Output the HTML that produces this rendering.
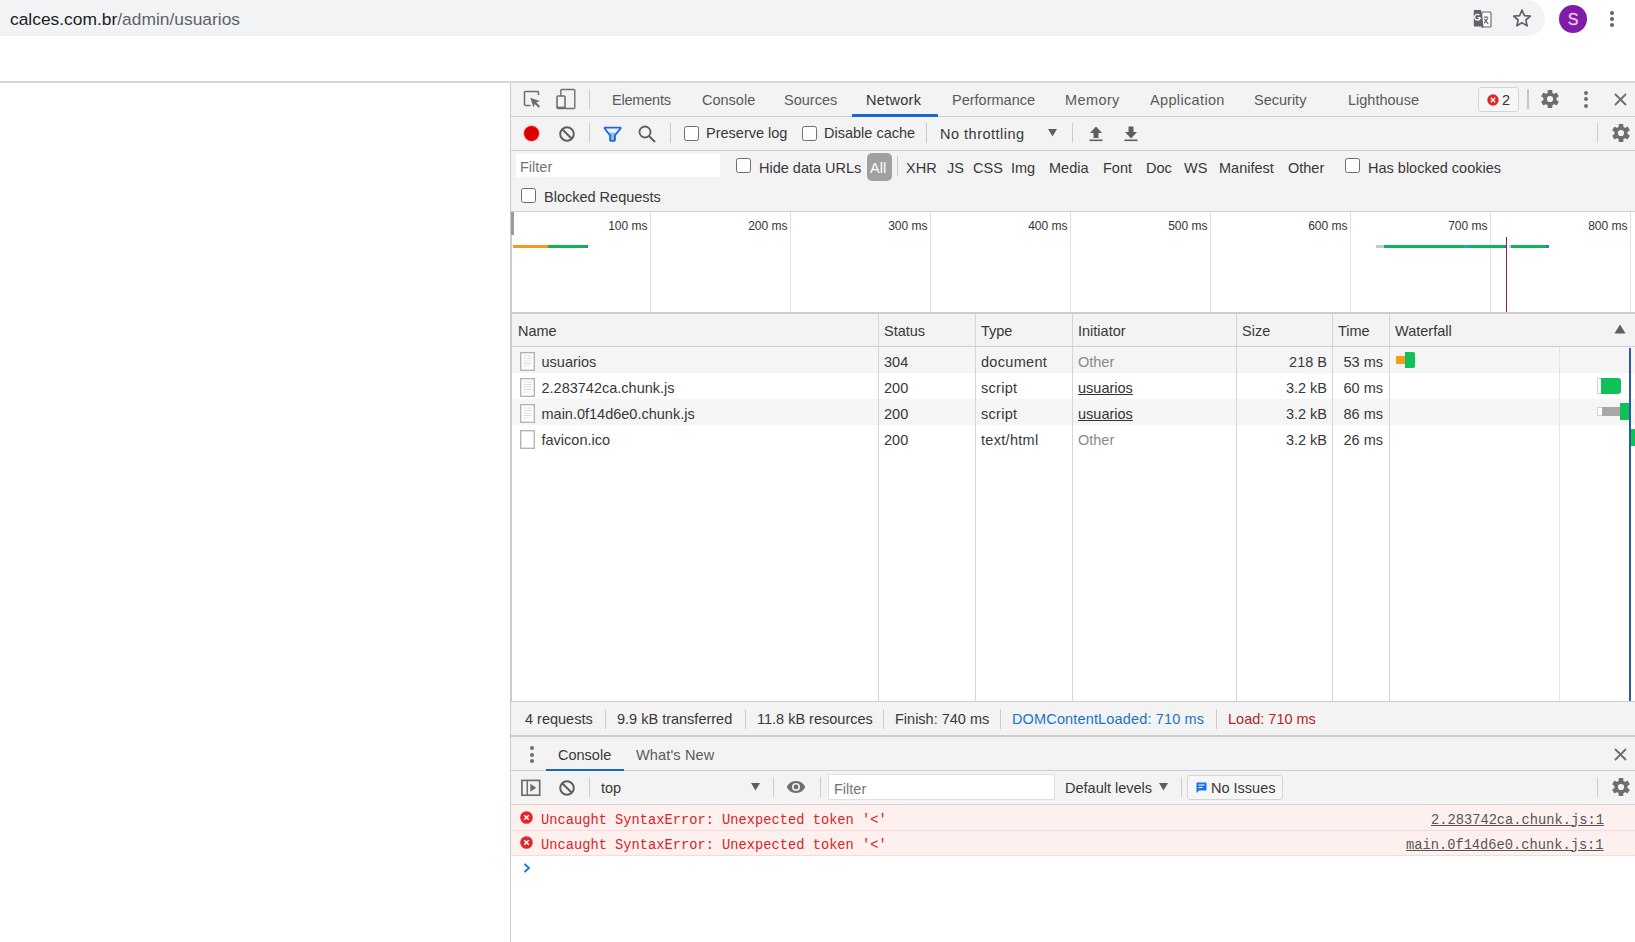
<!DOCTYPE html>
<html><head><meta charset="utf-8">
<style>
*{box-sizing:border-box;margin:0;padding:0}
html,body{width:1635px;height:942px;overflow:hidden;background:#fff;font-family:"Liberation Sans",sans-serif;color:#333}
.a{position:absolute;white-space:nowrap}
.t{position:absolute;white-space:nowrap;font-size:14.5px;line-height:17px;color:#383838}
.g{color:#5f6368}
.hl{position:absolute;height:1px;background:#cacdd1}
.vl{position:absolute;width:1px;background:#cacdd1}
.sep{position:absolute;width:1px;height:20px;background:#ccc}
.cb{position:absolute;width:15px;height:15px;border:1.5px solid #6e6e6e;border-radius:2.5px;background:#fff}
.m{font-family:"Liberation Mono",monospace;font-size:13.73px;line-height:16px}
svg{position:absolute;overflow:visible}
</style></head><body>
<!-- address bar -->
<div class="a" style="left:0;top:0;width:1545px;height:36px;background:#f1f3f4;border-radius:0 18px 18px 0"></div>
<div class="a" style="left:10px;top:9px;font-size:17.4px;line-height:20px;color:#202124">calces.com.br<span style="color:#5f6368">/admin/usuarios</span></div>
<!-- translate icon -->
<svg style="left:1465px;top:2px" width="30" height="30" viewBox="0 0 30 30">
 <rect x="16.8" y="10" width="9.2" height="15" rx="1" fill="#fff" stroke="#5f6368" stroke-width="1.1"/>
 <path d="M8.8 8h7.2l2.6 16.6H9.8a1 1 0 0 1-1-1z" fill="#5f6368"/>
 <path d="M18.5 24.6l-1.7 2v-2z" fill="#5f6368"/>
 <path d="M15.2 15.6h-2.4M15.4 15.4a2.9 2.9 0 1 1-0.9-2.3" fill="none" stroke="#fff" stroke-width="1.3"/>
 <path d="M18.8 15.2h4.6M21 14v1.4M19.3 16.8l4 5.4M22.8 16.4l-3.6 5" fill="none" stroke="#5f6368" stroke-width="1.1"/>
</svg>
<!-- star -->
<svg style="left:1512px;top:8px" width="20" height="20" viewBox="0 0 24 24">
 <path d="M12 2.5l2.9 6.6 7.1.6-5.4 4.7 1.6 7-6.2-3.7-6.2 3.7 1.6-7L2 9.7l7.1-.6z" fill="none" stroke="#5f6368" stroke-width="2" stroke-linejoin="round"/>
</svg>
<!-- avatar -->
<div class="a" style="left:1559px;top:5px;width:28px;height:28px;border-radius:50%;background:#7f1ca8;color:#f7c6ff;font-size:16px;line-height:30px;text-align:center;-webkit-text-stroke:0.3px #f7c6ff">S</div>
<!-- menu dots -->
<div class="a" style="left:1610px;top:11px;width:4px;height:4px;border-radius:50%;background:#5f6368"></div>
<div class="a" style="left:1610px;top:17px;width:4px;height:4px;border-radius:50%;background:#5f6368"></div>
<div class="a" style="left:1610px;top:23px;width:4px;height:4px;border-radius:50%;background:#5f6368"></div>



<!-- ================= devtools ================= -->
<div class="a" style="left:510px;top:82px;width:1125px;height:860px;background:#fff;border-left:1px solid #cbcbcb"></div>

<!-- tab bar -->
<div class="a" style="left:511px;top:82px;width:1124px;height:35px;background:#f3f3f3;border-bottom:1px solid #cacdd1"></div>
<!-- inspect icon -->
<svg style="left:523px;top:90px" width="18" height="18" viewBox="0 0 18 18">
 <path d="M7.5 15.5H2.5a1 1 0 0 1-1-1V2.5a1 1 0 0 1 1-1h12a1 1 0 0 1 1 1V5" fill="none" stroke="#6e6e6e" stroke-width="1.5"/>
 <path d="M7.3 7.8L16.9 11.1 13.3 12.5 17.1 16.3 15.7 17.7 11.9 13.9 10.5 17.5Z" fill="#6e6e6e"/>
</svg>
<!-- device icon -->
<svg style="left:556px;top:89px" width="20" height="20" viewBox="0 0 20 20">
 <path d="M4.8 7V1.5a1 1 0 0 1 1-1h12a1 1 0 0 1 1 1v17a1 1 0 0 1-1 1H9" fill="none" stroke="#6e6e6e" stroke-width="1.4"/>
 <rect x="1" y="7" width="8" height="12.4" rx="1" fill="none" stroke="#6e6e6e" stroke-width="1.6"/>
 <rect x="1" y="17.6" width="8" height="1.8" fill="#6e6e6e"/>
</svg>
<div class="sep" style="left:589px;top:89px;height:20px"></div>
<div class="t" style="left:612px;top:92px;color:#5a5a5a;letter-spacing:-0.2px">Elements</div>
<div class="t" style="left:702px;top:92px;color:#5a5a5a">Console</div>
<div class="t" style="left:784px;top:92px;color:#5a5a5a">Sources</div>
<div class="t" style="left:866px;top:92px;color:#333;letter-spacing:0.3px">Network</div>
<div class="a" style="left:852px;top:114px;width:86px;height:3px;background:#1b6ad3"></div>
<div class="t" style="left:952px;top:92px;color:#5a5a5a">Performance</div>
<div class="t" style="left:1065px;top:92px;color:#5a5a5a;letter-spacing:0.4px">Memory</div>
<div class="t" style="left:1150px;top:92px;color:#5a5a5a;letter-spacing:0.35px">Application</div>
<div class="t" style="left:1254px;top:92px;color:#5a5a5a">Security</div>
<div class="t" style="left:1348px;top:92px;color:#5a5a5a">Lighthouse</div>
<!-- error badge -->
<div class="a" style="left:1478px;top:87px;width:41px;height:25px;border:1px solid #d5d5d5;border-radius:3px;background:#f6f6f6"></div>
<svg style="left:1487px;top:94px" width="12" height="12" viewBox="0 0 12 12">
 <circle cx="6" cy="6" r="5.7" fill="#e0272b"/>
 <path d="M3.8 3.8l4.4 4.4M8.2 3.8l-4.4 4.4" stroke="#fff" stroke-width="1.3"/>
</svg>
<div class="t" style="left:1502px;top:92px;color:#333">2</div>
<div class="sep" style="left:1527px;top:89px;height:20px;width:1.5px;background:#c4c4c4"></div>
<!-- gear -->
<svg style="left:1540px;top:89px" width="20" height="20" viewBox="0 0 20 20"><g transform="translate(10 10)"><circle r="6.6" fill="#6e6e6e"/><rect x="-2.3" y="-9" width="4.6" height="18" rx="0.6" fill="#6e6e6e"/><rect x="-2.3" y="-9" width="4.6" height="18" rx="0.6" fill="#6e6e6e" transform="rotate(60)"/><rect x="-2.3" y="-9" width="4.6" height="18" rx="0.6" fill="#6e6e6e" transform="rotate(120)"/><circle r="3.1" fill="#f3f3f3"/></g></svg>
<div class="a" style="left:1584px;top:91px;width:4px;height:4px;border-radius:50%;background:#6e6e6e"></div>
<div class="a" style="left:1584px;top:97px;width:4px;height:4px;border-radius:50%;background:#6e6e6e"></div>
<div class="a" style="left:1584px;top:104px;width:4px;height:4px;border-radius:50%;background:#6e6e6e"></div>
<svg style="left:1614px;top:93px" width="13" height="13" viewBox="0 0 13 13">
 <path d="M1 1l11 11M12 1L1 12" stroke="#6e6e6e" stroke-width="1.8"/>
</svg>

<!-- network toolbar -->
<div class="a" style="left:511px;top:117px;width:1124px;height:34px;background:#f3f3f3;border-bottom:1px solid #cacdd1"></div>
<div class="a" style="left:524px;top:125.5px;width:15px;height:15px;border-radius:50%;background:#dc0000;box-shadow:0 0 1.5px 0.8px rgba(255,90,90,.45)"></div>
<svg style="left:559px;top:125.5px" width="16" height="16" viewBox="0 0 16 16">
 <circle cx="8" cy="8" r="6.8" fill="none" stroke="#5f5f5f" stroke-width="2"/>
 <path d="M3.2 3.2l9.6 9.6" stroke="#5f5f5f" stroke-width="2"/>
</svg>
<div class="sep" style="left:589px;top:123px"></div>
<svg style="left:598px;top:120px" width="30" height="28" viewBox="0 0 30 28">
 <defs><linearGradient id="fg" x1="0" y1="0" x2="0" y2="1"><stop offset="0" stop-color="#eaf3ff"/><stop offset="0.35" stop-color="#eaf3ff"/><stop offset="0.42" stop-color="#8db8f5"/><stop offset="1" stop-color="#8ab4f8"/></linearGradient></defs>
 <path d="M6.7 7.6h15.8v0.9l-5.6 7v4.6a0.8 0.8 0 0 1-0.8 0.8h-3.2a0.8 0.8 0 0 1-0.8-0.8v-4.6l-5.4-7z" fill="url(#fg)" stroke="#1b6ad6" stroke-width="1.9" stroke-linejoin="round"/>
</svg>
<svg style="left:638px;top:125px" width="19" height="18" viewBox="0 0 19 18">
 <circle cx="7" cy="7" r="5.5" fill="none" stroke="#5f5f5f" stroke-width="1.8"/>
 <path d="M11 11l6 6" stroke="#5f5f5f" stroke-width="2"/>
</svg>
<div class="sep" style="left:670px;top:123px"></div>
<div class="cb" style="left:684px;top:126px"></div>
<div class="t" style="left:706px;top:125px">Preserve log</div>
<div class="cb" style="left:802px;top:126px"></div>
<div class="t" style="left:824px;top:125px">Disable cache</div>
<div class="sep" style="left:926px;top:123px"></div>
<div class="t" style="left:940px;top:125.5px;letter-spacing:0.5px">No throttling</div>
<svg style="left:1048px;top:128.5px" width="9" height="8" viewBox="0 0 9 8"><path d="M0 0h9L4.5 7.5z" fill="#5f5f5f"/></svg>
<div class="sep" style="left:1072px;top:123px"></div>
<svg style="left:1089px;top:125.5px" width="14" height="16" viewBox="0 0 14 16">
 <path d="M7 0.5L13 7H9.5v5h-5V7H1z" fill="#5f5f5f"/><rect x="0.5" y="13.5" width="13" height="1.6" fill="#5f5f5f"/>
</svg>
<svg style="left:1124px;top:125.5px" width="14" height="16" viewBox="0 0 14 16">
 <path d="M4.5 0.5h5V6H13L7 12.5 1 6h3.5z" fill="#5f5f5f"/><rect x="0.5" y="13.5" width="13" height="1.6" fill="#5f5f5f"/>
</svg>
<div class="sep" style="left:1597px;top:123px"></div>
<svg style="left:1610.6px;top:122.8px" width="20" height="20" viewBox="0 0 20 20"><g transform="translate(10 10)"><circle r="6.6" fill="#6e6e6e"/><rect x="-2.3" y="-9" width="4.6" height="18" rx="0.6" fill="#6e6e6e"/><rect x="-2.3" y="-9" width="4.6" height="18" rx="0.6" fill="#6e6e6e" transform="rotate(60)"/><rect x="-2.3" y="-9" width="4.6" height="18" rx="0.6" fill="#6e6e6e" transform="rotate(120)"/><circle r="3.1" fill="#f3f3f3"/></g></svg>

<!-- filter bar -->
<div class="a" style="left:511px;top:151px;width:1124px;height:61px;background:#f3f3f3;border-bottom:1px solid #cacdd1"></div>
<div class="a" style="left:516px;top:154px;width:204px;height:23px;background:#fff"></div>
<div class="t" style="left:520px;top:158.5px;color:#757575">Filter</div>
<div class="cb" style="left:736px;top:158px"></div>
<div class="t" style="left:759px;top:159.5px">Hide data URLs</div>
<div class="a" style="left:867px;top:153px;width:25px;height:28px;border-radius:5px;background:#a0a0a0"></div>
<div class="t" style="left:870px;top:160px;color:#fff">All</div>
<div class="sep" style="left:897px;top:156px"></div>
<div class="t" style="left:906px;top:160px">XHR</div>
<div class="t" style="left:947px;top:160px">JS</div>
<div class="t" style="left:973px;top:160px">CSS</div>
<div class="t" style="left:1011px;top:160px">Img</div>
<div class="t" style="left:1049px;top:160px">Media</div>
<div class="t" style="left:1103px;top:160px">Font</div>
<div class="t" style="left:1146px;top:160px">Doc</div>
<div class="t" style="left:1184px;top:160px">WS</div>
<div class="t" style="left:1219px;top:160px">Manifest</div>
<div class="t" style="left:1288px;top:160px">Other</div>
<div class="cb" style="left:1345px;top:158px"></div>
<div class="t" style="left:1368px;top:159.5px">Has blocked cookies</div>
<div class="cb" style="left:521px;top:188px"></div>
<div class="t" style="left:544px;top:188.5px">Blocked Requests</div>

<!-- overview -->
<div class="a" style="left:511px;top:212px;width:1124px;height:100px;background:#fff"></div>
<div class="a" style="left:511px;top:212px;width:3px;height:23px;background:#9a9a9a"></div>
<div class="a" style="left:511px;top:312px;width:1124px;height:2px;background:#cdcdcd"></div>
<div class="a" style="left:650px;top:212px;width:1px;height:100px;background:#e1e1e1"></div>
<div class="a" style="left:510.5px;top:219px;width:137px;text-align:right;font-size:12px;line-height:14px;color:#333">100 ms</div>
<div class="a" style="left:790px;top:212px;width:1px;height:100px;background:#e1e1e1"></div>
<div class="a" style="left:650.5px;top:219px;width:137px;text-align:right;font-size:12px;line-height:14px;color:#333">200 ms</div>
<div class="a" style="left:930px;top:212px;width:1px;height:100px;background:#e1e1e1"></div>
<div class="a" style="left:790.5px;top:219px;width:137px;text-align:right;font-size:12px;line-height:14px;color:#333">300 ms</div>
<div class="a" style="left:1070px;top:212px;width:1px;height:100px;background:#e1e1e1"></div>
<div class="a" style="left:930.5px;top:219px;width:137px;text-align:right;font-size:12px;line-height:14px;color:#333">400 ms</div>
<div class="a" style="left:1210px;top:212px;width:1px;height:100px;background:#e1e1e1"></div>
<div class="a" style="left:1070.5px;top:219px;width:137px;text-align:right;font-size:12px;line-height:14px;color:#333">500 ms</div>
<div class="a" style="left:1350px;top:212px;width:1px;height:100px;background:#e1e1e1"></div>
<div class="a" style="left:1210.5px;top:219px;width:137px;text-align:right;font-size:12px;line-height:14px;color:#333">600 ms</div>
<div class="a" style="left:1490px;top:212px;width:1px;height:100px;background:#e1e1e1"></div>
<div class="a" style="left:1350.5px;top:219px;width:137px;text-align:right;font-size:12px;line-height:14px;color:#333">700 ms</div>
<div class="a" style="left:1630px;top:212px;width:1px;height:100px;background:#e1e1e1"></div>
<div class="a" style="left:1490.5px;top:219px;width:137px;text-align:right;font-size:12px;line-height:14px;color:#333">800 ms</div>

<div class="a" style="left:513px;top:245px;width:35.4px;height:3px;background:#f29a1e"></div>
<div class="a" style="left:548.4px;top:245px;width:38px;height:3px;background:#0fb456"></div>
<div class="a" style="left:586.4px;top:245px;width:2px;height:3px;background:#2a7ad8"></div>
<div class="a" style="left:1376px;top:245px;width:8px;height:3px;background:#c8c8c8"></div>
<div class="a" style="left:1384px;top:245px;width:80px;height:3px;background:#0fb456"></div>
<div class="a" style="left:1464px;top:245px;width:3.5px;height:3px;background:#2a9ad8"></div>
<div class="a" style="left:1467.5px;top:245px;width:36px;height:3px;background:#0fb456"></div>
<div class="a" style="left:1503.5px;top:245px;width:2px;height:3px;background:#2a7ad8"></div>
<div class="a" style="left:1508.5px;top:245px;width:2.5px;height:3px;background:#c8c8c8"></div>
<div class="a" style="left:1511px;top:245px;width:35px;height:3px;background:#0fb456"></div>
<div class="a" style="left:1546px;top:245px;width:3px;height:3px;background:#2a7ad8"></div>
<div class="a" style="left:1505.5px;top:237px;width:1.5px;height:75px;background:#8b2a2a"></div>

<!-- table header -->
<div class="a" style="left:511px;top:314px;width:1124px;height:33px;background:#f3f3f3;border-bottom:1px solid #cdcdcd"></div>
<div class="t" style="left:518px;top:322.8px">Name</div>
<div class="t" style="left:884px;top:322.8px">Status</div>
<div class="t" style="left:981px;top:322.8px">Type</div>
<div class="t" style="left:1078px;top:322.8px">Initiator</div>
<div class="t" style="left:1242px;top:322.8px">Size</div>
<div class="t" style="left:1338px;top:322.8px">Time</div>
<div class="t" style="left:1395px;top:322.8px">Waterfall</div>
<svg style="left:1614px;top:324px" width="12" height="10" viewBox="0 0 12 10"><path d="M6 0.5L11.5 9.5H0.5z" fill="#5f5f5f"/></svg>

<!-- rows -->
<div class="a" style="left:511px;top:347px;width:1124px;height:26px;background:#f5f5f5"></div>
<div class="a" style="left:511px;top:399px;width:1124px;height:26px;background:#f5f5f5"></div>
<div class="a" style="left:878px;top:314px;width:1px;height:387px;background:#d5d5d5"></div>
<div class="a" style="left:975px;top:314px;width:1px;height:387px;background:#d5d5d5"></div>
<div class="a" style="left:1072px;top:314px;width:1px;height:387px;background:#d5d5d5"></div>
<div class="a" style="left:1236px;top:314px;width:1px;height:387px;background:#d5d5d5"></div>
<div class="a" style="left:1332px;top:314px;width:1px;height:387px;background:#d5d5d5"></div>
<div class="a" style="left:1389px;top:314px;width:1px;height:387px;background:#d5d5d5"></div>
<div class="a" style="left:1559px;top:347px;width:1px;height:354px;background:#e4e4e4"></div>
<div class="a" style="left:1629px;top:348px;width:1.5px;height:353px;background:#2b5aa8"></div>
<svg style="left:520px;top:352px" width="15" height="19" viewBox="0 0 15 19"><rect x="0.7" y="0.7" width="13.6" height="17.6" fill="#fff" stroke="#b0b0b0" stroke-width="1.3"/><path d="M3.5 4h3M7.5 4h4M3.5 6.5h2M6.5 6.5h5M3.5 9h4M8.5 9h3M3.5 11.5h3M7 11.5h4.5M3.5 14h2.5M7 14h2" stroke="#d8d8d8" stroke-width="1"/></svg>
<div class="t" style="left:541.5px;top:354px">usuarios</div>
<div class="t" style="left:884px;top:354px">304</div>
<div class="t" style="left:981px;top:354px;letter-spacing:0.3px">document</div>
<div class="t" style="left:1078px;top:354px;color:#8a8a8a">Other</div>
<div class="t" style="left:1236px;top:354px;width:91px;text-align:right">218 B</div>
<div class="t" style="left:1332px;top:354px;width:51px;text-align:right">53 ms</div>
<svg style="left:520px;top:378px" width="15" height="19" viewBox="0 0 15 19"><rect x="0.7" y="0.7" width="13.6" height="17.6" fill="#fff" stroke="#b0b0b0" stroke-width="1.3"/><path d="M3.5 4h3M7.5 4h4M3.5 6.5h2M6.5 6.5h5M3.5 9h4M8.5 9h3M3.5 11.5h3M7 11.5h4.5M3.5 14h2.5M7 14h2" stroke="#d8d8d8" stroke-width="1"/></svg>
<div class="t" style="left:541.5px;top:380px">2.283742ca.chunk.js</div>
<div class="t" style="left:884px;top:380px">200</div>
<div class="t" style="left:981px;top:380px;letter-spacing:0.3px">script</div>
<div class="t" style="left:1078px;top:380px;color:#333;text-decoration:underline">usuarios</div>
<div class="t" style="left:1236px;top:380px;width:91px;text-align:right">3.2 kB</div>
<div class="t" style="left:1332px;top:380px;width:51px;text-align:right">60 ms</div>
<svg style="left:520px;top:404px" width="15" height="19" viewBox="0 0 15 19"><rect x="0.7" y="0.7" width="13.6" height="17.6" fill="#fff" stroke="#b0b0b0" stroke-width="1.3"/><path d="M3.5 4h3M7.5 4h4M3.5 6.5h2M6.5 6.5h5M3.5 9h4M8.5 9h3M3.5 11.5h3M7 11.5h4.5M3.5 14h2.5M7 14h2" stroke="#d8d8d8" stroke-width="1"/></svg>
<div class="t" style="left:541.5px;top:406px">main.0f14d6e0.chunk.js</div>
<div class="t" style="left:884px;top:406px">200</div>
<div class="t" style="left:981px;top:406px;letter-spacing:0.3px">script</div>
<div class="t" style="left:1078px;top:406px;color:#333;text-decoration:underline">usuarios</div>
<div class="t" style="left:1236px;top:406px;width:91px;text-align:right">3.2 kB</div>
<div class="t" style="left:1332px;top:406px;width:51px;text-align:right">86 ms</div>
<svg style="left:520px;top:430px" width="15" height="19" viewBox="0 0 15 19"><rect x="0.7" y="0.7" width="13.6" height="17.6" fill="#fff" stroke="#b0b0b0" stroke-width="1.3"/></svg>
<div class="t" style="left:541.5px;top:432px">favicon.ico</div>
<div class="t" style="left:884px;top:432px">200</div>
<div class="t" style="left:981px;top:432px;letter-spacing:0.3px">text/html</div>
<div class="t" style="left:1078px;top:432px;color:#8a8a8a">Other</div>
<div class="t" style="left:1236px;top:432px;width:91px;text-align:right">3.2 kB</div>
<div class="t" style="left:1332px;top:432px;width:51px;text-align:right">26 ms</div>

<!-- waterfall bars -->
<div class="a" style="left:1395.5px;top:355.5px;width:10px;height:8px;background:#f79b1a;border-radius:1px 0 0 1px"></div>
<div class="a" style="left:1405px;top:352px;width:10px;height:15.5px;background:#10c158;border-radius:0 2px 2px 0"></div>
<div class="a" style="left:1597px;top:378px;width:4px;height:16px;background:#fff;border:1px solid #d0d0d0;border-right:0"></div>
<div class="a" style="left:1600.5px;top:377.5px;width:20.5px;height:16.5px;background:#10c158;border-radius:0 3px 3px 0"></div>
<div class="a" style="left:1597px;top:407px;width:5.5px;height:9px;background:#fff;border:1px solid #d0d0d0;border-right:0"></div>
<div class="a" style="left:1602.3px;top:407px;width:18px;height:9px;background:#a8a8a8"></div>
<div class="a" style="left:1620.2px;top:403.3px;width:9px;height:16.5px;background:#10c158"></div>
<div class="a" style="left:1630.5px;top:429px;width:5px;height:17px;background:#10c158"></div>

<!-- summary -->
<div class="a" style="left:511px;top:701px;width:1124px;height:36px;background:#f3f3f3;border-top:1px solid #cdcdcd;border-bottom:2px solid #cdcdcd"></div>
<div class="t" style="left:525px;top:711px">4 requests</div>
<div class="sep" style="left:605px;top:709px"></div>
<div class="t" style="left:617px;top:711px">9.9 kB transferred</div>
<div class="sep" style="left:745px;top:709px"></div>
<div class="t" style="left:757px;top:711px">11.8 kB resources</div>
<div class="sep" style="left:883px;top:709px"></div>
<div class="t" style="left:895px;top:711px">Finish: 740 ms</div>
<div class="sep" style="left:1000px;top:709px"></div>
<div class="t" style="left:1012px;top:711px;color:#1a73c8;letter-spacing:0.15px">DOMContentLoaded: 710 ms</div>
<div class="sep" style="left:1216px;top:709px"></div>
<div class="t" style="left:1228px;top:711px;color:#b3261e">Load: 710 ms</div>

<!-- drawer tabs -->
<div class="a" style="left:511px;top:737px;width:1124px;height:34px;background:#f3f3f3;border-bottom:1px solid #cacdd1"></div>
<div class="a" style="left:530px;top:746px;width:4px;height:4px;border-radius:50%;background:#6e6e6e"></div>
<div class="a" style="left:530px;top:752.5px;width:4px;height:4px;border-radius:50%;background:#6e6e6e"></div>
<div class="a" style="left:530px;top:759px;width:4px;height:4px;border-radius:50%;background:#6e6e6e"></div>
<div class="t" style="left:558px;top:746.7px">Console</div>
<div class="a" style="left:546px;top:768.5px;width:78px;height:2px;background:#1f66c1"></div>
<div class="t" style="left:636px;top:746.7px;color:#5a5a5a;letter-spacing:0.15px">What's New</div>
<svg style="left:1614px;top:748px" width="13" height="13" viewBox="0 0 13 13"><path d="M1 1l11 11M12 1L1 12" stroke="#6e6e6e" stroke-width="1.8"/></svg>

<!-- console toolbar -->
<div class="a" style="left:511px;top:771px;width:1124px;height:34px;background:#f3f3f3;border-bottom:1px solid #e2cfd0"></div>
<svg style="left:521px;top:779px" width="20" height="18" viewBox="0 0 20 18">
 <rect x="0.9" y="1.4" width="17.8" height="14.8" fill="none" stroke="#6e6e6e" stroke-width="1.7"/>
 <path d="M6.3 1.5v14.6" stroke="#6e6e6e" stroke-width="1.5"/>
 <path d="M9.3 4.8l6 4-6 4z" fill="#6e6e6e"/>
</svg>
<svg style="left:559px;top:779.5px" width="16" height="16" viewBox="0 0 16 16">
 <circle cx="8" cy="8" r="6.8" fill="none" stroke="#5f5f5f" stroke-width="2"/>
 <path d="M3.2 3.2l9.6 9.6" stroke="#5f5f5f" stroke-width="2"/>
</svg>
<div class="sep" style="left:589px;top:777px"></div>
<div class="t" style="left:601px;top:780px">top</div>
<svg style="left:751px;top:783px" width="9" height="8" viewBox="0 0 9 8"><path d="M0 0h9L4.5 7.5z" fill="#5f5f5f"/></svg>
<div class="sep" style="left:773px;top:777px"></div>
<svg style="left:786px;top:780px" width="20" height="14" viewBox="0 0 20 14">
 <path d="M10 1C5.5 1 2 4 0.8 7 2 10 5.5 13 10 13s8-3 9.2-6C18 4 14.5 1 10 1z" fill="#6e6e6e"/>
 <circle cx="10" cy="7" r="4" fill="#f3f3f3"/><circle cx="10" cy="7" r="2.4" fill="#6e6e6e"/>
</svg>
<div class="sep" style="left:820px;top:777px"></div>
<div class="a" style="left:828px;top:774px;width:227px;height:26px;background:#fff;border:1px solid #e0e0e0"></div>
<div class="t" style="left:834px;top:781px;color:#757575">Filter</div>
<div class="t" style="left:1065px;top:780px">Default levels</div>
<svg style="left:1159px;top:783px" width="9" height="8" viewBox="0 0 9 8"><path d="M0 0h9L4.5 7.5z" fill="#5f5f5f"/></svg>
<div class="sep" style="left:1181px;top:777px"></div>
<div class="a" style="left:1187px;top:775px;width:96px;height:25px;border:1px solid #d5d5d5;border-radius:3px;background:#f6f6f6"></div>
<svg style="left:1196px;top:782px" width="11" height="11" viewBox="0 0 11 11"><path d="M0.5 0.5h10v8H3l-2.5 2.5z" fill="#1a73e8"/><path d="M2.5 3h6M2.5 5.5h4" stroke="#fff" stroke-width="1"/></svg>
<div class="t" style="left:1211px;top:780px">No Issues</div>
<div class="sep" style="left:1597px;top:777px"></div>
<svg style="left:1610.6px;top:777px" width="20" height="20" viewBox="0 0 20 20"><g transform="translate(10 10)"><circle r="6.6" fill="#6e6e6e"/><rect x="-2.3" y="-9" width="4.6" height="18" rx="0.6" fill="#6e6e6e"/><rect x="-2.3" y="-9" width="4.6" height="18" rx="0.6" fill="#6e6e6e" transform="rotate(60)"/><rect x="-2.3" y="-9" width="4.6" height="18" rx="0.6" fill="#6e6e6e" transform="rotate(120)"/><circle r="3.1" fill="#f3f3f3"/></g></svg>

<!-- console messages -->
<div class="a" style="left:511px;top:805px;width:1124px;height:26px;background:#fff0f0;border-bottom:1px solid #fdd8d8"></div>
<div class="a" style="left:511px;top:831px;width:1124px;height:25px;background:#fff0f0;border-bottom:1px solid #fdd8d8"></div>
<svg style="left:520px;top:811px" width="13" height="13" viewBox="0 0 13 13"><circle cx="6.5" cy="6.5" r="6.3" fill="#e0272b"/><path d="M4.2 4.2l4.6 4.6M8.8 4.2l-4.6 4.6" stroke="#fff" stroke-width="1.4"/></svg>
<svg style="left:520px;top:836px" width="13" height="13" viewBox="0 0 13 13"><circle cx="6.5" cy="6.5" r="6.3" fill="#e0272b"/><path d="M4.2 4.2l4.6 4.6M8.8 4.2l-4.6 4.6" stroke="#fff" stroke-width="1.4"/></svg>
<div class="a m" style="left:541px;top:812.5px;color:#d92424">Uncaught SyntaxError: Unexpected token '&lt;'</div>
<div class="a m" style="left:541px;top:837.5px;color:#d92424">Uncaught SyntaxError: Unexpected token '&lt;'</div>
<div class="a m" style="left:1431px;top:812.5px;color:#555;text-decoration:underline">2.283742ca.chunk.js:1</div>
<div class="a m" style="left:1406px;top:837.5px;color:#555;text-decoration:underline">main.0f14d6e0.chunk.js:1</div>
<svg style="left:523px;top:863px" width="8" height="10" viewBox="0 0 8 10"><path d="M1.5 1l4.5 4-4.5 4" fill="none" stroke="#1a73e8" stroke-width="1.8"/></svg>
<div class="a" style="left:510px;top:82px;width:1px;height:860px;background:#cbcbcb"></div>
<div class="a" style="left:511px;top:212px;width:1px;height:489px;background:#cbcbcb"></div>
<div class="a" style="left:511px;top:212px;width:3px;height:23px;background:#9a9a9a"></div>
<div class="a" style="left:0;top:81px;width:1635px;height:2px;background:#d6d8d8"></div>
</body></html>
